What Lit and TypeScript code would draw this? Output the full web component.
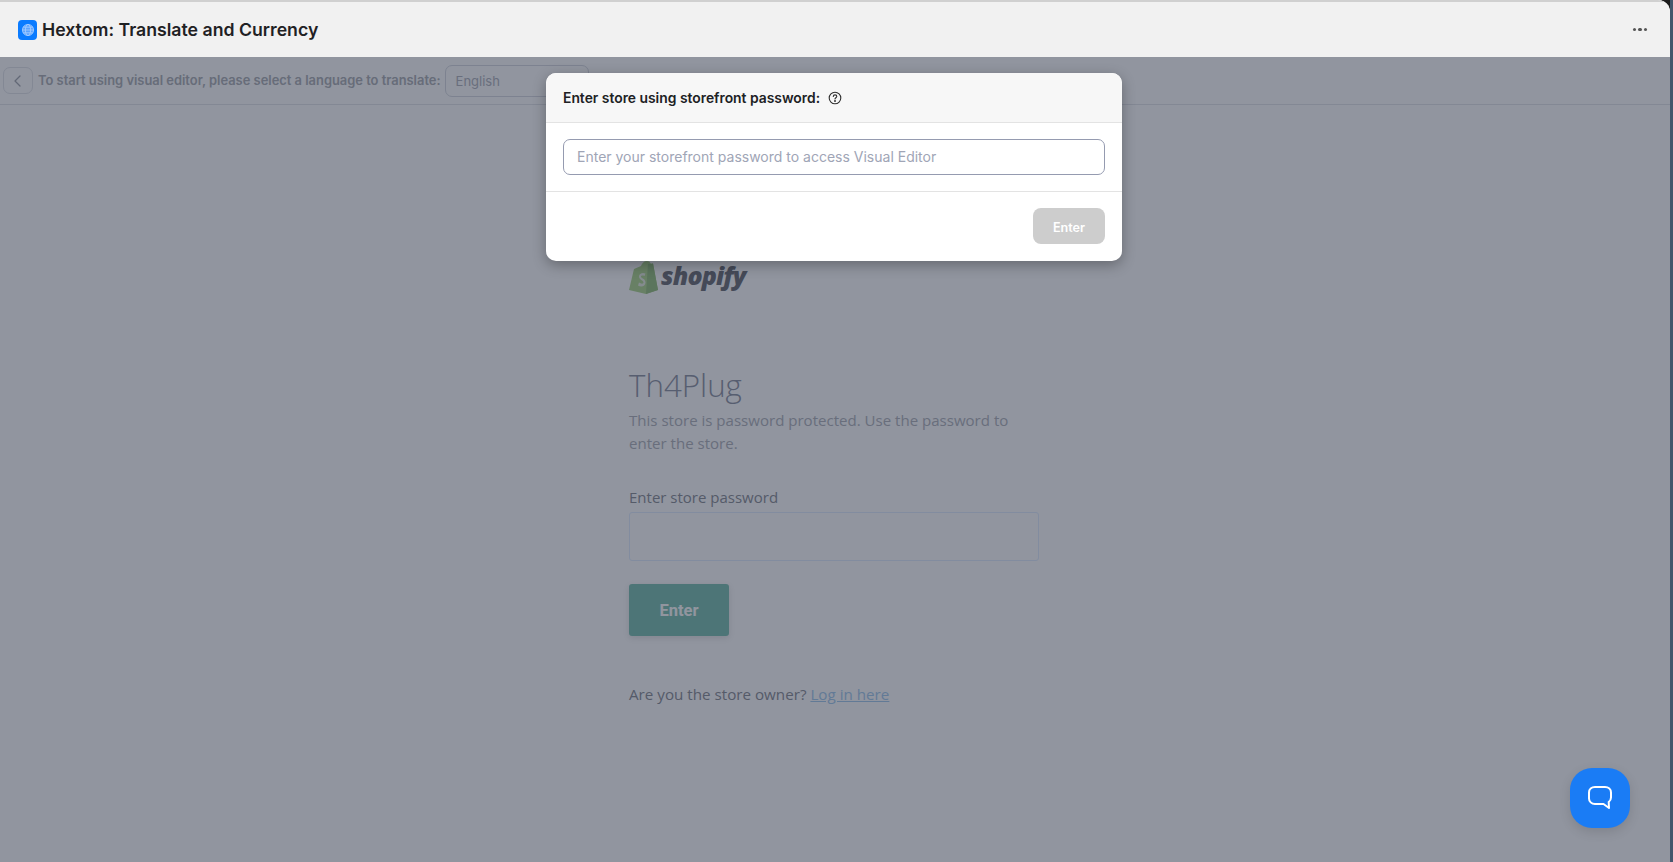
import { LitElement, html, css } from "lit";
import { customElement } from "lit/decorators.js";

@customElement("app-root")
export class AppRoot extends LitElement {
  static styles = css`
    :host { display: block; height: 862px; position: relative; overflow: hidden; background: #44566c; font-family: Inter, "Noto Sans", sans-serif; }
    :host::before { content: ""; position: absolute; top: 0; right: 3px; width: 12px; height: 12px; background: #1c1c1c; }
    .frame { height: 862px; margin-right: 3px; display: flex; flex-direction: column; background: #fff; position: relative; border-top-right-radius: 12px; overflow: hidden; }
    .topbar { height: 57px; box-sizing: border-box; border-top: 2px solid #d0d0d0; background: #f1f1f1; display: flex; align-items: center; padding: 0 22px 0 18px; gap: 5px; flex: none; position: relative; z-index: 2; }
    .logo { width: 19px; height: 20px; border-radius: 4px; background: #0a7bff; display: flex; align-items: center; justify-content: center; }
    .title { font-size: 17.7px; font-weight: 600; color: #1f2124; flex: 1; }
    .dots { display: flex; gap: 2px; margin-right: 1px; }
    .dots i { width: 3.5px; height: 3.5px; border-radius: 50%; background: #555; }
    .toolbar { height: 48px; box-sizing: border-box; border-bottom: 1px solid #e3e5ea; display: flex; align-items: center; padding-left: 3px; gap: 5px; flex: none; }
    .back { width: 30px; height: 27px; border: 1px solid #e3e5ea; border-radius: 7px; display: flex; align-items: center; justify-content: center; box-sizing: border-box; }
    .hint { font-size: 12.9px; font-weight: 600; color: #acafb4; }
    .select { width: 144px; height: 32px; box-sizing: border-box; border: 1px solid #d7dae1; border-radius: 7px; padding: 0 10px; display: flex; align-items: center; font-size: 13px; color: #b0b3bd; margin-left: -1px; }
    .store { padding: 156px 0 0 629px; font-family: "Open Sans", sans-serif; width: 410px; }
    .brand { display: flex; align-items: center; gap: 2px; height: 32px; }
    .brand span { font-style: italic; font-weight: 800; font-size: 25px; letter-spacing: -0.85px; color: #6a6d74; padding-bottom: 4px; }
    h1 { font-size: 31.3px; font-weight: 300; margin: 71px 0 0; line-height: 42px; color: #8e93a4; }
    .desc { font-size: 15.05px; line-height: 22.5px; margin: 3px 0 0; color: #b0b3bb; }
    label { display: block; margin-top: 32px; font-size: 15px; line-height: 22px; color: #8a8d95; }
    .field { margin-top: 4px; height: 49px; box-sizing: border-box; width: 410px; border: 1px solid #e1eeff; border-radius: 3px; }
    .go { margin-top: 23px; width: 100px; height: 52px; background: #7bc1b0; border-radius: 3px; display: flex; align-items: center; justify-content: center; color: #fff; font: 700 16.5px Roboto, sans-serif; box-shadow: 0 2px 6px rgba(0,0,0,.12); }
    .owner { margin: 47px 0 0; font-size: 15.2px; line-height: 22px; color: #8a8d95; white-space: nowrap; }
    .owner a { color: #a4cbee; text-decoration: underline; }
    .scrim { position: absolute; inset: 57px 0 0 0; background: rgba(30,39,60,.49); }
    .modal { position: absolute; left: 546px; top: 73px; width: 576px; height: 188px; background: #fff; border-radius: 10px; box-shadow: 0 4px 14px rgba(0,0,0,.3); display: flex; flex-direction: column; overflow: hidden; }
    .mhead { height: 50px; box-sizing: border-box; background: #f7f7f7; border-bottom: 1px solid #e3e3e3; display: flex; align-items: center; padding: 0 17px; gap: 8px; font-size: 13.87px; font-weight: 600; color: #202124; flex: none; }
    .mbody { height: 69px; box-sizing: border-box; border-bottom: 1px solid #e3e3e3; padding: 16px 17px; flex: none; }
    .minput { height: 36px; box-sizing: border-box; border: 1px solid #959bb0; border-radius: 7px; padding: 0 13px 2px; display: flex; align-items: center; font-size: 14px; color: #a0a5b6; }
    .mfoot { flex: 1; display: flex; justify-content: flex-end; padding: 16px 17px; }
    .mbtn { width: 72px; height: 36px; box-sizing: border-box; padding-top: 2px; border-radius: 8px; background: #cdcdcd; color: #fff; display: flex; align-items: center; justify-content: center; font-size: 12.6px; font-weight: 600; }
    .chat { position: absolute; left: 1570px; top: 768px; width: 60px; height: 60px; border-radius: 22px; background: #1a7cf5; display: flex; align-items: center; justify-content: center; box-shadow: 0 4px 12px rgba(0,0,0,.12); }
  `;

  render() {
    return html`
      <div class="frame">
        <div class="topbar">
          <div class="logo">
            <svg width="14" height="14" viewBox="0 0 14 14" fill="none" stroke="#a8ceff" stroke-width="0.8">
              <circle cx="7" cy="7" r="5.6" fill="#5ba3ff"/><ellipse cx="7" cy="7" rx="2.6" ry="5.6"/><path d="M1.400 7h11.200M2.200 4.200h9.600M2.200 9.800h9.600"/>
            </svg>
          </div>
          <div class="title">Hextom: Translate and Currency</div>
          <div class="dots"><i></i><i></i><i></i></div>
        </div>
        <div class="toolbar">
          <div class="back">
            <svg width="14" height="14" viewBox="0 0 14 14" fill="none" stroke="#a4a7ae" stroke-width="1.300" stroke-linecap="round" stroke-linejoin="round"><path d="M9 2 4 7l5 5"/></svg>
          </div>
          <div class="hint">To start using visual editor, please select a language to translate:</div>
          <div class="select">English</div>
        </div>
        <div class="store">
          <div class="brand">
            <svg width="30" height="33" viewBox="0 0 30 33">
              <path d="M0 29 5 8l7-3c1-3 3-5 6-5 2 0 3 1 4 3l2-.5L29 29 17 33Z" fill="#aed68e"/>
              <path d="M24 2.500 29 29 17 33 19 3Z" fill="#96c07e"/>
              <path d="M16.500 12.500c-3-1.500-6.500 0-6.500 3 0 3.500 4.500 3.500 4.500 6 0 1.500-2.500 1.500-4.500 0l-1 3c3 2 7.500 1 7.500-3 0-4-4.500-4-4.500-6 0-1.200 2-1.200 3.500-.5Z" fill="#e6ecdf"/>
            </svg>
            <span>shopify</span>
          </div>
          <h1>Th4Plug</h1>
          <p class="desc">This store is password protected. Use the password to enter the store.</p>
          <label>Enter store password</label>
          <div class="field"></div>
          <div class="go">Enter</div>
          <p class="owner">Are you the store owner? <a>Log in here</a></p>
        </div>
        <div class="scrim"></div>
        <div class="modal">
          <div class="mhead">
            <span>Enter store using storefront password:</span>
            <svg width="14" height="14" viewBox="0 0 14 14" fill="none" stroke="#303030" stroke-width="1.100" stroke-linecap="round">
              <circle cx="7" cy="7" r="5.800"/><path d="M5.300 5.500c0-2.200 3.500-2.200 3.500 0 0 1.200-1.800 1.300-1.800 2.500"/><circle cx="7" cy="10" r=".4" fill="#303030"/>
            </svg>
          </div>
          <div class="mbody"><div class="minput">Enter your storefront password to access Visual Editor</div></div>
          <div class="mfoot"><div class="mbtn">Enter</div></div>
        </div>
        <div class="chat">
          <svg width="28" height="28" viewBox="0 0 28 28" fill="none" stroke="#fff" stroke-width="2" stroke-linejoin="round">
            <path d="M9 3h10c3.500 0 6 2.300 6 5.500v5c0 2-1 3.500-2.300 4.500l.3 6-5.500-4H9c-3.500 0-6-2.500-6-5.500v-6C3 5.300 5.500 3 9 3Z"/>
          </svg>
        </div>
      </div>
    `;
  }
}
